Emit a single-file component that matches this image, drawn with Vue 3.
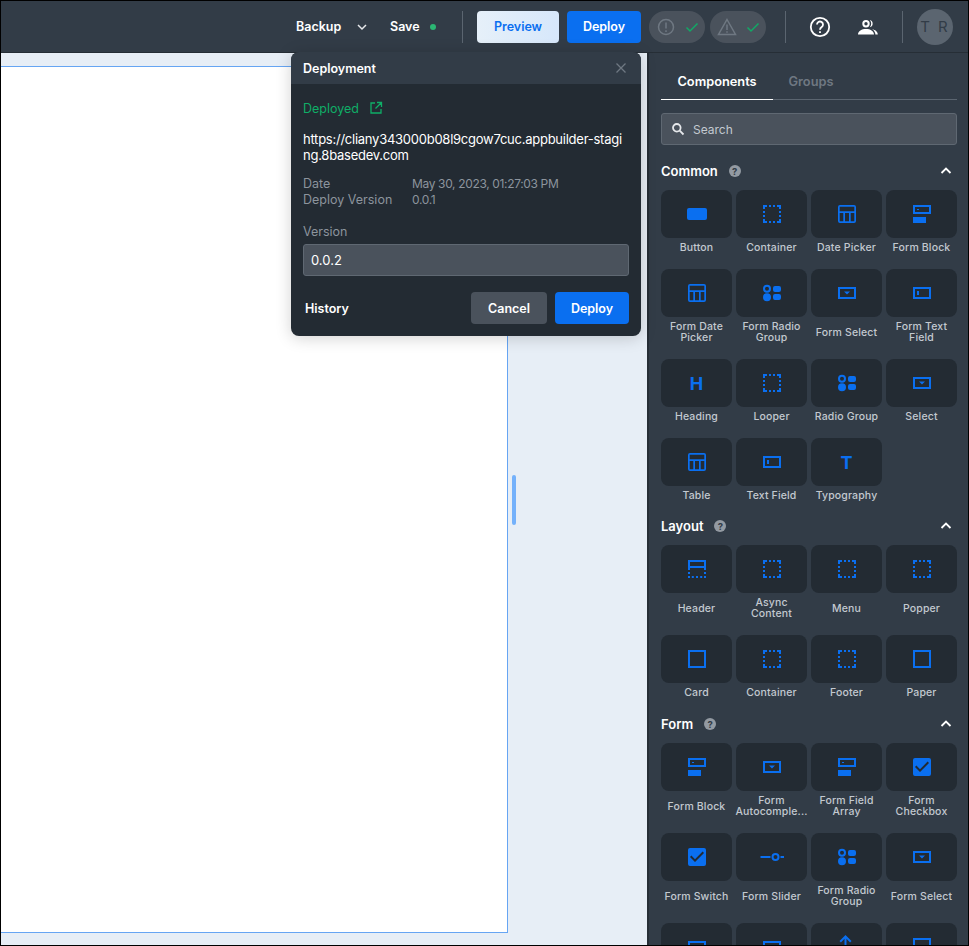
<script setup>
const corners = 'M3 3h4v2H5v2H3z M17 3h4v4h-2V5h-2z M3 17h2v2h2v2H3z M19 17h2v4h-4v-2h2z '
const dotted = corners + 'M9 3h2v2H9z M13 3h2v2h-2z M9 19h2v2H9z M13 19h2v2h-2z M3 9h2v2H3z M3 13h2v2H3z M19 9h2v2h-2z M19 13h2v2h-2z'
const icons = {
  button: 'M4 6h16a2 2 0 0 1 2 2v8a2 2 0 0 1-2 2H4a2 2 0 0 1-2-2V8a2 2 0 0 1 2-2z',
  dotted,
  table: 'M5 3h14a2 2 0 0 1 2 2v14a2 2 0 0 1-2 2H5a2 2 0 0 1-2-2V5a2 2 0 0 1 2-2z M4.7 4.7v4.6h14.6V4.7z M4.7 11v8.3h3.6V11z M10 11v8.3h4V11z M15.7 11v8.3h3.6V11z',
  block: 'M3 3h18v9H3z M5 5v5h14V5z M7 7h2v1H7z M3 15h13v6H3z',
  text: 'M3 6h18v12H3z M5 8v8h14V8z M7 10h2v4H7z',
  select: 'M3 6h18v12H3z M5 8v8h14V8z M9 10.500h6l-3 3z',
  radio: 'M3 7.700a4 4 0 1 0 8 0a4 4 0 1 0-8 0z M5 7.700a2 2 0 1 0 4 0a2 2 0 1 0-4 0z M15 5h4a2 2 0 0 1 2 2v2a2 2 0 0 1-2 2h-4a2 2 0 0 1-2-2V7a2 2 0 0 1 2-2z M3 16.300a4 4 0 1 0 8 0a4 4 0 1 0-8 0z M15 13h4a2 2 0 0 1 2 2v2a2 2 0 0 1-2 2h-4a2 2 0 0 1-2-2v-2a2 2 0 0 1 2-2z',
  header: 'M3 3h18v10h-2V11H5v2H3z M5 5v4h14V5z M3 15h2v2H3z M19 15h2v2h-2z M3 19h2v2H3z M6.800 19h2v2h-2z M11 19h2v2h-2z M15.200 19h2v2h-2z M19 19h2v2h-2z',
  square: 'M3 3h18v18H3z M5 5v14h14V5z',
  check: 'M5 3h14a2 2 0 0 1 2 2v14a2 2 0 0 1-2 2H5a2 2 0 0 1-2-2V5a2 2 0 0 1 2-2z M10 17l-5-5 1.400-1.400 3.600 3.600 7.600-7.600L19 8z',
  slider: 'M.5 11h10v2H.5z M11.500 12a4 4 0 1 0 8 0a4 4 0 1 0-8 0z M13.500 12a2 2 0 1 0 4 0a2 2 0 1 0-4 0z M20.500 11h4v2h-4z',
  upload: 'M10.500 0l6 6-1.400 1.400-3.600-3.600V24h-2V3.800L5.900 7.400 4.500 6z',
}

const sections = [
  { title: 'Common', items: [
    ['Button', 'button'], ['Container', 'dotted'], ['Date Picker', 'table'], ['Form Block', 'block'],
    ['Form Date Picker', 'table'], ['Form Radio Group', 'radio'], ['Form Select', 'select'], ['Form Text Field', 'text'],
    ['Heading', 'H'], ['Looper', 'dotted'], ['Radio Group', 'radio'], ['Select', 'select'],
    ['Table', 'table'], ['Text Field', 'text'], ['Typography', 'T'],
  ] },
  { title: 'Layout', items: [
    ['Header', 'header'], ['Async Content', 'dotted'], ['Menu', 'dotted'], ['Popper', 'dotted'],
    ['Card', 'square'], ['Container', 'dotted'], ['Footer', 'dotted'], ['Paper', 'square'],
  ] },
  { title: 'Form', items: [
    ['Form Block', 'block'], ['Form Autocomple...', 'select'], ['Form Field Array', 'block'], ['Form Checkbox', 'check'],
    ['Form Switch', 'check'], ['Form Slider', 'slider'], ['Form Radio Group', 'radio'], ['Form Select', 'select'],
    ['', 'text'], ['', 'text'], ['', 'upload'], ['', 'square'],
  ] },
]
</script>

<template>
  <div class="app">
    <header class="topbar">
      <span class="bar-link">Backup</span>
      <svg class="chev" width="12" height="12" viewBox="0 0 12 12"><path d="M2 4l4 4 4-4" /></svg>
      <span class="bar-link save">Save</span>
      <span class="dot"></span>
      <span class="divider first"></span>
      <button class="btn preview">Preview</button>
      <button class="btn primary bar-deploy">Deploy</button>
      <div class="status">
        <svg width="22" height="22" viewBox="0 0 22 22" class="status-icon">
          <circle cx="11" cy="11" r="7.5" />
          <path d="M11 6.5v6M11 14.3v1.6" />
        </svg>
        <svg width="16" height="16" viewBox="0 0 16 16" class="ok"><path d="M2.5 8.5l3.5 3.5 7.5-7.5" /></svg>
      </div>
      <div class="status second">
        <svg width="22" height="22" viewBox="0 0 22 22" class="status-icon">
          <path d="M11 3.5l8.5 15h-17z" />
          <path d="M11 8.5v5.5M11 15.2v1.6" />
        </svg>
        <svg width="16" height="16" viewBox="0 0 16 16" class="ok"><path d="M2.5 8.5l3.5 3.5 7.5-7.5" /></svg>
      </div>
      <span class="divider second-div"></span>
      <svg class="help" width="24" height="24" viewBox="0 0 24 24">
        <circle cx="12" cy="12" r="9.2" />
        <path d="M9 9.6a3 3 0 1 1 4.7 2.4c-1.1.8-1.7 1.3-1.7 2.7" />
        <path d="M12 16.2v1.8" />
      </svg>
      <svg class="people" width="22" height="20" viewBox="0 0 22 20">
        <path fill-rule="evenodd" d="M9 3a3.700 3.700 0 1 1 0 7.400a3.700 3.700 0 0 1 0-7.400z M9 5a1.700 1.700 0 1 0 0 3.400a1.700 1.700 0 0 0 0-3.400z M1 17.500c0-3.500 3.800-5.500 8-5.500s8 2 8 5.500z" />
        <path d="M12.800 3.100a3.700 3.700 0 0 1 0 7.200c1.900-1.900 1.900-5.300 0-7.200z M15.200 12.300c2.900.6 5.600 2.200 5.600 5.200h-2.400c0-2-1.200-3.800-3.200-5.200z" />
      </svg>
      <span class="divider third-div"></span>
      <div class="avatar">T R</div>
    </header>

    <div class="main">
      <div class="canvas">
        <div class="page"></div>
        <div class="handle"></div>
      </div>

      <aside class="panel">
        <div class="tabs">
          <div class="tab active">Components</div>
          <div class="tab">Groups</div>
        </div>
        <div class="search">
          <svg width="14" height="14" viewBox="0 0 14 14"><circle cx="5.800" cy="5.800" r="3.800" /><path d="M8.700 8.700l3.800 3.800" /></svg>
          <span>Search</span>
        </div>

        <section v-for="s in sections" :key="s.title" class="group" :class="s.title.toLowerCase()">
          <div class="group-head">
            <span class="group-title">{{ s.title }}</span>
            <span class="q">?</span>
            <svg class="up" width="14" height="14" viewBox="0 0 14 14"><path d="M2.500 9l4.500-4.500 4.500 4.500" /></svg>
          </div>
          <div class="grid">
            <div v-for="(it, i) in s.items" :key="i" class="item">
              <div class="tile">
                <span v-if="it[1].length === 1" class="glyph">{{ it[1] }}</span>
                <svg v-else width="24" height="24" viewBox="0 0 24 24"><path fill-rule="evenodd" :d="icons[it[1]]" /></svg>
              </div>
              <div v-if="it[0]" class="label">{{ it[0] }}</div>
            </div>
          </div>
        </section>
      </aside>
    </div>

    <div class="popover">
      <div class="pop-head">
        <span>Deployment</span>
        <svg width="12" height="12" viewBox="0 0 12 12"><path d="M1.500 1.500l9 9M10.500 1.500l-9 9" /></svg>
      </div>
      <div class="pop-body">
        <div class="deployed">
          <span>Deployed</span>
          <svg width="14" height="14" viewBox="0 0 14 14"><path d="M6 2H2v10h10V8M8 1.500h4.500V6M12.300 1.700L6.500 7.500" /></svg>
        </div>
        <div class="url">https://cliany343000b08l9cgow7cuc.appbuilder-stagi<br>ng.8basedev.com</div>
        <div class="meta">
          <span>Date</span><span class="val">May 30, 2023, 01:27:03 PM</span>
          <span>Deploy Version</span><span class="val">0.0.1</span>
        </div>
        <div class="field-label">Version</div>
        <div class="input">0.0.2</div>
        <div class="pop-foot">
          <span class="history">History</span>
          <button class="btn cancel">Cancel</button>
          <button class="btn primary pop-deploy">Deploy</button>
        </div>
      </div>
    </div>
  </div>
</template>

<style scoped>
.app {
  position: relative;
  width: 969px;
  height: 946px;
  box-sizing: border-box;
  border: 1px solid #000;
  display: flex;
  flex-direction: column;
  overflow: hidden;
  font-family: Inter, "Liberation Sans", sans-serif;
  background: #e7eef6;
}

.topbar {
  height: 52px;
  flex: none;
  box-sizing: border-box;
  display: flex;
  align-items: center;
  background: #323c47;
  border-bottom: 1px solid #262e36;
  padding-left: 295px;
}

.bar-link {
  color: #fff;
  font-size: 12.500px;
  font-weight: 600;
  width: 47px;
}
.chev {
  margin-left: 13px;
  fill: none;
  stroke: #e6e8eb;
  stroke-width: 1.500;
}
.save {
  margin-left: 22px;
  width: 31px;
}
.dot {
  width: 6px;
  height: 6px;
  border-radius: 50%;
  background: #2bb673;
  margin-left: 9px;
}
.divider {
  width: 1px;
  height: 32px;
  background: #5b6570;
}
.first { margin-left: 26px; }
.second-div { margin-left: 19px; }
.third-div { margin-left: 23px; }

.btn {
  font-family: inherit;
  font-size: 12.500px;
  font-weight: 600;
  height: 32px;
  border: 0;
  border-radius: 4px;
  padding: 0;
}
.preview {
  width: 82px;
  margin-left: 14px;
  color: #0a6ff0;
  background: linear-gradient(90deg, #e6f0f9, #d6e7fb);
}
.primary {
  color: #fff;
  background: #0a6ff0;
}
.bar-deploy {
  width: 74px;
  margin-left: 8px;
}

.status {
  width: 56px;
  height: 32px;
  margin-left: 8px;
  border-radius: 16px;
  background: #4a525c;
  display: flex;
  align-items: center;
  padding-left: 6px;
  box-sizing: border-box;
}
.second { margin-left: 5px; }
.status-icon {
  fill: none;
  stroke: #6f7882;
  stroke-width: 1.500;
}
.ok {
  margin-left: 7px;
  fill: none;
  stroke: #12a865;
  stroke-width: 1.500;
}

.help {
  margin-left: 22px;
  fill: none;
  stroke: #fff;
  stroke-width: 1.800;
}
.people {
  margin-left: 25px;
  fill: #fff;
}
.avatar {
  width: 36px;
  height: 36px;
  margin-left: 14px;
  border-radius: 50%;
  background: #5b6570;
  color: #323c47;
  font-size: 15px;
  letter-spacing: 2px;
  display: flex;
  align-items: center;
  justify-content: center;
}

.main {
  flex: 1;
  min-height: 0;
  display: flex;
}

.canvas {
  flex: 1;
  display: flex;
  padding: 13px 0 12px;
}
.page {
  width: 506px;
  background: #fff;
  border: 1px solid #66a5f3;
  border-left: 0;
}
.handle {
  width: 4px;
  height: 50px;
  margin-left: 4px;
  align-self: center;
  border-radius: 2px;
  background: #74b1fb;
}

.panel {
  width: 321px;
  flex: none;
  box-sizing: border-box;
  background: #323c47;
  border-left: 2px solid #262e36;
  padding: 0 11px 0 12px;
  overflow: hidden;
}

.tabs {
  display: flex;
  height: 47px;
  box-sizing: border-box;
  border-bottom: 1px solid #5b6570;
}
.tab {
  width: 76px;
  padding-top: 21px;
  box-sizing: border-box;
  text-align: center;
  font-size: 12.800px;
  font-weight: 600;
  color: #6f7882;
}
.tab.active {
  width: 112px;
  color: #fff;
  height: 47px;
  border-bottom: 1px solid #fff;
}

.search {
  margin-top: 13px;
  height: 32px;
  box-sizing: border-box;
  display: flex;
  align-items: center;
  gap: 8px;
  padding-left: 9px;
  background: #4a525c;
  border: 1px solid #5f6872;
  border-radius: 3px;
  color: #c3c9d0;
  font-size: 12px;
}
.search svg {
  fill: none;
  stroke: #e6e8eb;
  stroke-width: 1.800;
}

.group { margin-top: 12px; }
.group.common { margin-top: 17px; }
.group.form { margin-top: 13px; }

.group-head {
  height: 18px;
  margin-bottom: 10px;
  display: flex;
  align-items: center;
}
.group-title {
  color: #fff;
  font-size: 13px;
  font-weight: 600;
}
.q {
  width: 12px;
  height: 12px;
  margin-left: 11px;
  border-radius: 50%;
  background: #939aa2;
  color: #323c47;
  font-size: 9.500px;
  font-weight: 700;
  display: flex;
  align-items: center;
  justify-content: center;
}
.up {
  margin-left: auto;
  margin-right: 4px;
  fill: none;
  stroke: #fff;
  stroke-width: 1.800;
}

.grid {
  display: grid;
  grid-template-columns: repeat(4, 71px);
  column-gap: 4px;
  row-gap: 12px;
}
.item {
  display: flex;
  flex-direction: column;
}
.tile {
  height: 48px;
  flex: none;
  border-radius: 8px;
  background: #232b33;
  display: flex;
  align-items: center;
  justify-content: center;
}
.tile svg { fill: #0a6ff0; }
.glyph {
  color: #0a6ff0;
  font-size: 18px;
  font-weight: 700;
}
.label {
  flex: 1;
  display: flex;
  align-items: center;
  justify-content: center;
  padding: 4px 2px;
  text-align: center;
  font-size: 10.500px;
  letter-spacing: 0.15px;
  line-height: 11px;
  font-weight: 500;
  color: #c3c9d0;
}

.popover {
  position: absolute;
  left: 290px;
  top: 51px;
  width: 350px;
  border-radius: 8px;
  overflow: hidden;
  background: #232b33;
  box-shadow: 0 2px 16px rgba(0, 0, 0, 0.18);
}
.pop-head {
  height: 32px;
  padding: 0 14px 0 12px;
  display: flex;
  align-items: center;
  justify-content: space-between;
  background: #323c47;
  color: #fff;
  font-size: 12.500px;
  font-weight: 600;
}
.pop-head svg {
  fill: none;
  stroke: #6f7882;
  stroke-width: 1.300;
}
.pop-body {
  padding: 16px 12px 12px;
}
.deployed {
  display: flex;
  align-items: center;
  gap: 10px;
  height: 16px;
  color: #0fae67;
  font-size: 12.500px;
}
.deployed svg {
  fill: none;
  stroke: #0fae67;
  stroke-width: 1.300;
}
.url {
  margin-top: 15px;
  color: #fff;
  font-size: 13px;
  letter-spacing: -0.25px;
  line-height: 16px;
  white-space: nowrap;
}
.meta {
  margin-top: 13px;
  display: grid;
  grid-template-columns: 109px 1fr;
  color: #8c949d;
  font-size: 12.500px;
  line-height: 16px;
}
.val {
  font-size: 12px;
  letter-spacing: -0.35px;
}
.field-label {
  margin-top: 16px;
  color: #8c949d;
  font-size: 12.500px;
  line-height: 16px;
}
.input {
  margin-top: 4px;
  height: 32px;
  box-sizing: border-box;
  padding-left: 7px;
  display: flex;
  align-items: center;
  background: #4a525c;
  border: 1px solid #5f6872;
  border-radius: 3px;
  color: #fff;
  font-size: 13px;
}
.pop-foot {
  margin-top: 16px;
  display: flex;
  align-items: center;
}
.history {
  margin-left: 2px;
  margin-right: auto;
  color: #fff;
  font-size: 12.500px;
  font-weight: 600;
}
.cancel {
  width: 76px;
  background: #4a525c;
  color: #fff;
}
.pop-deploy {
  width: 74px;
  margin-left: 8px;
}
</style>
